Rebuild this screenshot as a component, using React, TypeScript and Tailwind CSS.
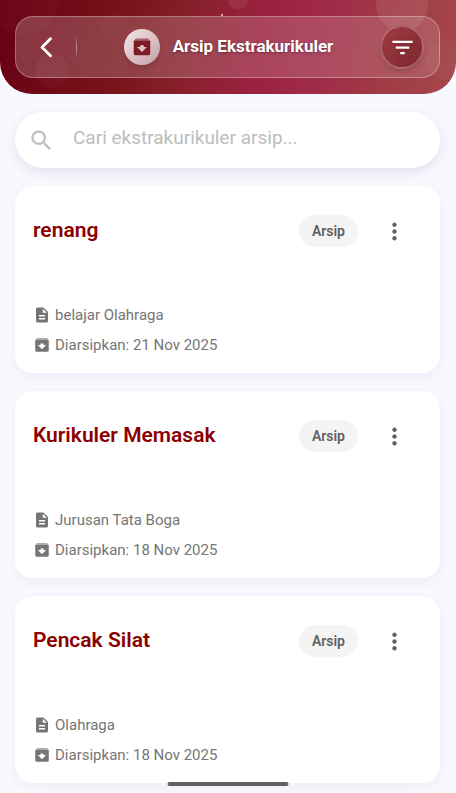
import React, { useState } from "react";
import { MdDescription, MdFilterList, MdMoreVert, MdSearch } from "react-icons/md";

type Extracurricular = {
  id: string;
  name: string;
  description: string;
  archivedAt: string;
};

const archivedItems: Extracurricular[] = [
  { id: "renang", name: "renang", description: "belajar Olahraga", archivedAt: "21 Nov 2025" },
  { id: "memasak", name: "Kurikuler Memasak", description: "Jurusan Tata Boga", archivedAt: "18 Nov 2025" },
  { id: "silat", name: "Pencak Silat", description: "Olahraga", archivedAt: "18 Nov 2025" },
];

// Archive box with a lighter lid
const ArchiveIcon: React.FC<{ className?: string }> = ({ className }) => (
  <svg className={className} viewBox="0 0 24 24" fill="currentColor" aria-hidden="true">
    <path d="M5.2 2.600h13.6L21 5.600H3z" fillOpacity="0.6" />
    <path fillRule="evenodd" d="M3 5.2h18V19a2 2 0 0 1-2 2H5a2 2 0 0 1-2-2zM12 17.5l5.5-5.5H14v-2h-4v2H6.500z" />
  </svg>
);

// Soft bubbles behind the glass bar
const HeaderBubbles: React.FC = () => (
  <svg className="absolute inset-0 h-full w-full" viewBox="0 0 456 94" preserveAspectRatio="none" aria-hidden="true">
    <g fill="#fff">
      <circle cx="22" cy="-6" r="40" fillOpacity="0.025" />
      <circle cx="115" cy="27" r="15" fillOpacity="0.015" />
      <circle cx="52" cy="71" r="17" fillOpacity="0.035" />
      <circle cx="238" cy="-2" r="11" fillOpacity="0.08" />
      <circle cx="402" cy="5" r="26" fillOpacity="0.09" />
      <circle cx="446" cy="60" r="20" fillOpacity="0.03" />
      <circle cx="222" cy="15" r="1" fillOpacity="0.8" />
    </g>
  </svg>
);

const Header: React.FC = () => (
  <header className="relative overflow-hidden rounded-b-[32px] bg-[linear-gradient(102deg,#680013_0%,#6f0816_12%,#77151b_28%,#88202c_42%,#9a213e_56%,#a02b48_70%,#a03b45_84%,#a4484a_100%)] py-4 pr-4 pl-[15px]">
    <HeaderBubbles />
    <div className="relative flex h-[62px] items-center rounded-[18px] border border-white/30 bg-[linear-gradient(100deg,rgba(255,255,255,0.2),rgba(255,255,255,0.13))] pr-[15px] pl-3">
      <button type="button" aria-label="Kembali" className="flex h-9 w-9 items-center justify-center">
        <svg className="h-6 w-6" viewBox="0 0 24 24" fill="none" stroke="#fff" strokeWidth="2.8" strokeLinecap="round" strokeLinejoin="round">
          <path d="M16.500 3.800L8 12.300l8.500 8.500" />
        </svg>
      </button>
      <span className="ml-3 h-6 w-px bg-linear-to-b from-white/0 via-white/50 to-white/0" />
      <div className="flex flex-1 items-center justify-center gap-[13px]">
        <span className="flex h-9 w-9 items-center justify-center rounded-full bg-linear-to-br from-[#f5e6e8] to-[#c3a0a8] shadow-md">
          <ArchiveIcon className="h-[22px] w-[22px] text-[#7d1a24]" />
        </span>
        <h1 className="text-[17px] font-bold whitespace-nowrap text-white [text-shadow:0_1px_3px_rgba(0,0,0,0.35)]">
          Arsip Ekstrakurikuler
        </h1>
      </div>
      <button
        type="button"
        aria-label="Filter"
        className="flex h-11 w-11 items-center justify-center rounded-full border-2 border-white/25 bg-linear-to-br from-[#a33a40] to-[#7c2730] shadow-md"
      >
        <MdFilterList className="h-[27px] w-[27px] shrink-0 text-white drop-shadow-sm" />
      </button>
    </div>
  </header>
);

const ArchiveCard: React.FC<{ item: Extracurricular }> = ({ item }) => (
  <article className="rounded-[18px] bg-white px-[18px] pt-6 pb-[18px] shadow-[0_4px_12px_rgba(60,60,120,0.06)]">
    <div className="flex h-[42px] items-center">
      <h2 className="flex-1 text-[21px] font-semibold text-[#8b0000]">{item.name}</h2>
      <span className="rounded-full bg-[#f4f4f4] px-[13px] py-1.5 text-sm leading-5 font-semibold text-[#616161]">Arsip</span>
      <button type="button" aria-label={`Menu ${item.name}`} className="mr-1 ml-3 flex h-12 w-12 items-center justify-center">
        <MdMoreVert className="h-[27px] w-[27px] text-[#616161]" />
      </button>
    </div>
    <div className="mt-[53px] space-y-2.5 text-[15px] leading-5 text-[#757575]">
      <p className="flex items-center gap-1">
        <MdDescription className="h-[18px] w-[18px]" />
        {item.description}
      </p>
      <p className="flex items-center gap-1">
        <ArchiveIcon className="h-[18px] w-[18px]" />
        Diarsipkan: {item.archivedAt}
      </p>
    </div>
  </article>
);

export default function App() {
  const [query, setQuery] = useState("");
  const visible = archivedItems.filter((item) => item.name.toLowerCase().includes(query.toLowerCase()));

  return (
    <div className="min-h-screen bg-[#f8f9ff] font-['Roboto',sans-serif]">
      <Header />
      <main className="space-y-[18px] pt-[18px] pr-4 pb-[9px] pl-[15px]">
        <label className="flex h-14 items-center gap-[18px] rounded-full bg-white px-[13px] shadow-[0_4px_12px_rgba(60,60,100,0.12)]">
          <MdSearch className="h-[27px] w-[27px] shrink-0 text-[#bdbdbd]" />
          <input
            type="text"
            aria-label="Cari ekstrakurikuler arsip"
            placeholder="Cari ekstrakurikuler arsip..."
            value={query}
            onChange={(e) => setQuery(e.target.value)}
            className="min-w-0 flex-1 bg-transparent pb-1 text-[19px] text-[#424242] outline-none placeholder:text-[#bdbdbd]"
          />
        </label>
        {visible.map((item) => (
          <ArchiveCard key={item.id} item={item} />
        ))}
      </main>
      {/* Gesture bar */}
      <div className="fixed bottom-[7px] left-1/2 h-1 w-[121px] -translate-x-1/2 rounded-full bg-[#616161]" />
    </div>
  );
}
